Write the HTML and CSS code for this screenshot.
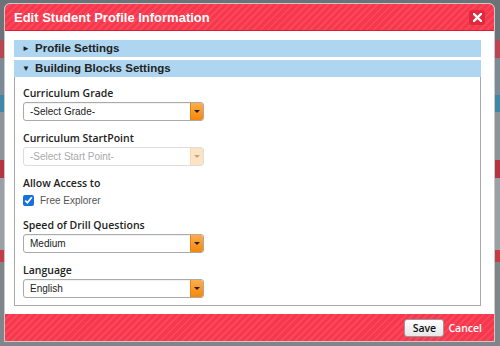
FILE: index.html
```html
<!DOCTYPE html>
<html lang="en">
<head>
    <meta charset="UTF-8">
    <meta name="viewport" content="width=device-width, initial-scale=1.0">
    <title>Edit Student Profile Information</title>
    <link rel="stylesheet" href="styles.css">
</head>
<body>

    <!-- Dialog -->
    <div class="dialog">
        <div class="dialog-title">
            <span>Edit Student Profile Information</span>
            <button class="close-btn">
                <svg width="9" height="9" viewBox="0 0 9 9"><path d="M1 1L8 8M8 1L1 8" stroke="white" stroke-width="2.4" stroke-linecap="square"/></svg>
            </button>
        </div>

        <div class="dialog-body">
            <div class="section-head"><span class="caret">&#9658;</span> Profile Settings</div>
            <div class="section-head open"><span class="caret">&#9660;</span> Building Blocks Settings</div>

            <div class="panel">
                <div class="field">
                    <label>Curriculum Grade</label>
                    <div class="select">
                        <span>-Select Grade-</span>
                        <span class="arrow"></span>
                    </div>
                </div>

                <div class="field">
                    <label>Curriculum StartPoint</label>
                    <div class="select disabled">
                        <span>-Select Start Point-</span>
                        <span class="arrow"></span>
                    </div>
                </div>

                <div class="field">
                    <label>Allow Access to</label>
                    <div class="check-row">
                        <input type="checkbox" checked>
                        <span>Free Explorer</span>
                    </div>
                </div>

                <div class="field">
                    <label>Speed of Drill Questions</label>
                    <div class="select">
                        <span>Medium</span>
                        <span class="arrow"></span>
                    </div>
                </div>

                <div class="field last">
                    <label>Language</label>
                    <div class="select">
                        <span>English</span>
                        <span class="arrow"></span>
                    </div>
                </div>
            </div>
        </div>

        <div class="dialog-footer">
            <button class="save-btn">Save</button>
            <a href="#" class="cancel-link">Cancel</a>
        </div>
    </div>

</body>
</html>
```

FILE: styles.css
```css
/* Page behind the dialog */
body {
    margin: 0;
    padding: 3px 0 0 4px;
    font-family: "Liberation Sans", Arial, sans-serif;
    background: linear-gradient(180deg, #6d7278 0, #6d7278 40px, #b8454f 40px, #b8454f 58px,
        #7b8a94 58px, #7b8a94 95px, #3f87a8 95px, #3f87a8 112px, #8d9399 112px, #8d9399 160px,
        #b5343f 160px, #b5343f 178px, #9aa0a6 178px, #9aa0a6 250px, #c33c48 250px, #c33c48 262px,
        #7f858b 262px);
    height: 343px;
}

.dialog {
    width: 489px;
    height: 337px;
    border: 1px solid #c9c9c9;
    border-radius: 6px 6px 0 0;
    background: white;
    display: flex;
    flex-direction: column;
    overflow: hidden;
}

/* Striped red bars */
.dialog-title, .dialog-footer {
    background: repeating-linear-gradient(135deg, #f6384e 0, #f6384e 3px, #fc4659 3px, #fc4659 5px);
}

.dialog-title {
    height: 27px;
    border-bottom: 1px solid #d91f33;
    display: flex;
    align-items: center;
    justify-content: space-between;
    padding: 0 9px 0 9px;
    color: white;
    font-size: 13px;
    font-weight: bold;
}

.close-btn {
    width: 16px;
    height: 15px;
    padding: 0;
    border: none;
    border-radius: 3px;
    background: #e2283c;
    display: flex;
    align-items: center;
    justify-content: center;
    cursor: pointer;
}

.dialog-body {
    flex-grow: 1;
    padding: 9px 13px 8px 9px;
}

.section-head {
    height: 17px;
    line-height: 17px;
    background-color: #aed6f1;
    color: #222;
    font-size: 11.5px;
    font-weight: bold;
    padding-left: 8px;
    margin-bottom: 3px;
}

.section-head .caret {
    font-size: 8px;
    vertical-align: 1px;
    margin-right: 2px;
}

.section-head.open {
    margin-bottom: 0;
}

.panel {
    border: 1px solid #a9a9a9;
    border-top: none;
    padding: 8px 8px 8px 8px;
    height: 212px;
}

.field {
    margin-bottom: 9px;
}

.field label {
    display: block;
    font-family: "Open Sans", sans-serif;
    font-weight: 600;
    font-size: 10.5px;
    line-height: 16px;
    color: #222;
    margin-bottom: 1px;
}

.select {
    box-sizing: border-box;
    width: 181px;
    height: 19px;
    border: 1px solid #aaa;
    border-radius: 3px;
    display: flex;
    align-items: center;
    justify-content: space-between;
    font-size: 10px;
    color: #222;
    padding-left: 6px;
    box-shadow: inset 0 1px 1px rgba(0, 0, 0, 0.06);
    overflow: hidden;
}

.select .arrow {
    width: 12px;
    height: 17px;
    background: linear-gradient(180deg, #ffad4f, #f5870a);
    border-left: 1px solid #e7830f;
    display: flex;
    align-items: center;
    justify-content: center;
}

.select .arrow::after {
    content: "";
    border-left: 3px solid transparent;
    border-right: 3px solid transparent;
    border-top: 3px solid #222;
}

.select.disabled {
    border-color: #ddd;
    color: #aaa;
    box-shadow: none;
}

.select.disabled .arrow {
    background: #fde3c3;
    border-left-color: #fcd9b0;
}

.select.disabled .arrow::after {
    border-top-color: #b9a58e;
}

.check-row {
    display: flex;
    align-items: center;
    height: 16px;
    font-size: 10px;
    color: #555;
}

.check-row input {
    width: 11px;
    height: 11px;
    margin: 0 6px 0 0;
    accent-color: #1a6fe0;
}

.dialog-footer {
    height: 28px;
    display: flex;
    align-items: center;
    justify-content: flex-end;
    padding-right: 12px;
}

.save-btn {
    width: 40px;
    height: 18px;
    padding: 0;
    border: 1px solid #999;
    border-radius: 3px;
    background: linear-gradient(180deg, #ffffff, #e6e6e6);
    font-family: "Open Sans", sans-serif;
    font-weight: 600;
    font-size: 10.5px;
    color: #111;
    cursor: pointer;
}

.cancel-link {
    margin-left: 4px;
    font-family: "Open Sans", sans-serif;
    font-weight: 600;
    font-size: 10.5px;
    color: white;
    text-decoration: none;
}
```
